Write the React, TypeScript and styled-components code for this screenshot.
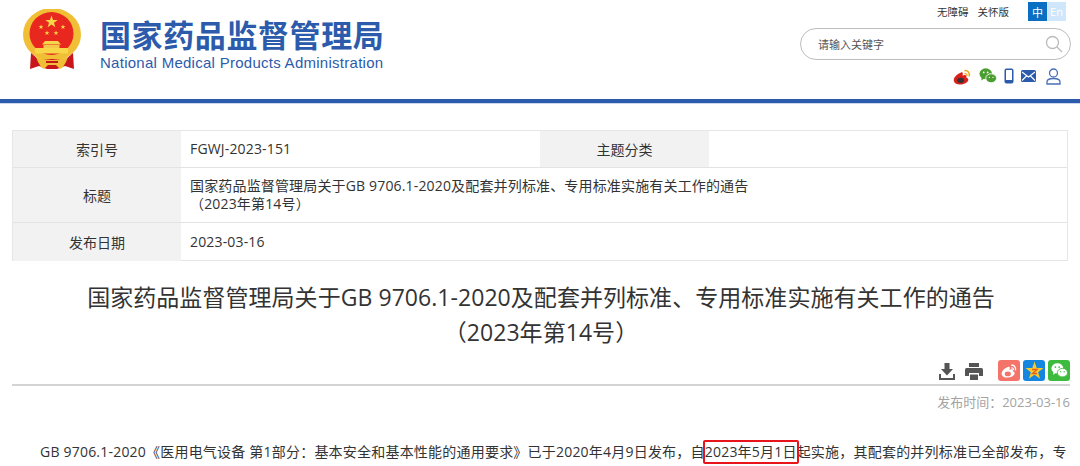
import React from "react"
import styled, { createGlobalStyle } from "styled-components"

const GlobalStyle = createGlobalStyle`
  html, body { margin: 0; padding: 0; background: #fff; }
  body { font-family: "Open Sans", "Noto Sans CJK SC", sans-serif; color: #333; }
`

const Page = styled.div`
  width: 1080px;
  height: 466px;
  overflow: hidden;
`

const Header = styled.header`
  height: 99px;
  display: flex;
  justify-content: space-between;
  border-bottom: 4px solid #2c5bab;
  box-shadow: 0 1px 0 #c9d8ee;
`

const Brand = styled.div`
  display: flex;
  align-items: flex-start;
  padding: 9px 0 0 23px;
  gap: 19px;
`

const BrandText = styled.div`
  display: flex;
  flex-direction: column;
  padding-top: 4px;
`

const BrandTitle = styled.div`
  font-family: "Noto Sans CJK SC", sans-serif;
  font-size: 31px;
  font-weight: 700;
  line-height: 42px;
  color: #2c5bab;
  letter-spacing: 0.6px;
  white-space: nowrap;
`

const BrandSub = styled.div`
  font-family: "Liberation Sans", sans-serif;
  font-size: 15px;
  line-height: 18px;
  margin-top: -1px;
  color: #2c5bab;
  letter-spacing: 0.27px;
  white-space: nowrap;
`

const Tools = styled.div`
  width: 285px;
  padding-top: 2px;
  display: flex;
  flex-direction: column;
  align-items: flex-end;
`

const TopLinks = styled.div`
  display: flex;
  align-items: center;
  height: 19px;
  padding-right: 14px;
  font-size: 10.5px;
  color: #333;
`

const TopLink = styled.span<{ $gap: number }>`
  margin-right: ${p => p.$gap}px;
`

const LangTab = styled.span<{ $active?: boolean }>`
  width: 19px;
  height: 19px;
  display: flex;
  align-items: center;
  justify-content: center;
  font-size: 11px;
  color: #fff;
  background: ${p => (p.$active ? "#0a6fc2" : "#cfe6fb")};
`

const SearchBox = styled.div`
  width: 245px;
  height: 30px;
  margin: 7px 9px 0 0;
  border: 1px solid #bdbdbd;
  border-radius: 16px;
  display: flex;
  align-items: center;
  justify-content: space-between;
  padding: 0 7px 0 17px;
  font-size: 11px;
  color: #555;
`

const Social = styled.div`
  display: flex;
  align-items: center;
  gap: 7px;
  height: 18px;
  margin-top: 7px;
  padding-right: 19px;
`

const UserIcon = styled.svg`
  margin-left: 3px;
`

const Main = styled.main`
  padding: 27px 10px 0 12px;
`

const InfoTable = styled.div`
  display: grid;
  grid-template-columns: 168px 359px 169px 1fr;
  grid-template-rows: 37px 55px 38px;
  border: 1px solid #e6e6e6;
  width: 1056px;
  box-sizing: border-box;
  height: 131px;
`

const Label = styled.div<{ $last?: boolean }>`
  background: #f2f2f2;
  display: flex;
  align-items: center;
  justify-content: center;
  font-size: 14px;
  color: #333;
  padding-bottom: 1px;
  border-bottom: ${p => (p.$last ? "none" : "1px solid #e3e3e3")};
`

const Value = styled.div<{ $span?: boolean; $last?: boolean }>`
  grid-column: ${p => (p.$span ? "2 / 5" : "auto")};
  display: flex;
  align-items: center;
  padding-left: 9px;
  font-size: 14px;
  letter-spacing: 0.16px;
  color: #333;
  line-height: 18px;
  border-bottom: ${p => (p.$last ? "none" : "1px solid #e3e3e3")};
`

const Headline = styled.h1`
  margin: 19px 0 0;
  padding: 0 40px;
  text-align: center;
  font-size: 23px;
  font-weight: 400;
  letter-spacing: 0.05px;
  line-height: 35px;
  color: #333;
`

const ShareRow = styled.div`
  margin-top: 10px;
  width: 1058px;
  height: 26px;
  box-sizing: border-box;
  border-bottom: 2px solid #d4d4d4;
  display: flex;
  justify-content: flex-end;
  align-items: flex-start;
`

const ShareBtn = styled.span<{ $bg: string }>`
  width: 22px;
  height: 21px;
  border-radius: 3px;
  background: ${p => p.$bg};
  display: flex;
  align-items: center;
  justify-content: center;
  margin-left: 3px;
`

const PlainIcon = styled.span<{ $gap: number }>`
  width: 20px;
  height: 22px;
  margin-right: ${p => p.$gap}px;
  display: flex;
  align-items: center;
  justify-content: center;
`

const PublishTime = styled.div`
  margin-top: 7px;
  width: 1058px;
  text-align: right;
  font-size: 13px;
  line-height: 18px;
  color: #a3a3a3;
`

const Body = styled.p`
  margin: 29px 0 0;
  width: 1058px;
  text-indent: 28px;
  font-size: 14px;
  letter-spacing: 0.21px;
  line-height: 24px;
  color: #333;
  white-space: nowrap;
`

const Highlight = styled.span`
  display: inline-block;
  text-indent: 0;
  position: relative;
  &::after {
    content: "";
    position: absolute;
    left: -2px;
    right: -2px;
    top: 0;
    bottom: 0;
    border: 2px solid #e8141c;
    border-radius: 2px;
  }
`

const star = (cx: number, cy: number, r: number) => {
  const pts: string[] = []
  for (let i = 0; i < 10; i++) {
    const a = (Math.PI / 5) * i - Math.PI / 2
    const d = i % 2 === 0 ? r : r * 0.4
    pts.push(`${(cx + d * Math.cos(a)).toFixed(2)},${(cy + d * Math.sin(a)).toFixed(2)}`)
  }
  return pts.join(" ")
}

const Emblem = () => (
  <svg width="58" height="62" viewBox="0 0 58 62">
    <ellipse cx="29" cy="25.5" rx="29" ry="26.5" fill="#f0bf35" />
    <ellipse cx="28.5" cy="24.5" rx="22" ry="21.5" fill="#e8281f" />
    <polygon points={star(28.5, 13, 6.5)} fill="#f7d64a" />
    <polygon points={star(18, 18, 2.6)} fill="#f7d64a" />
    <polygon points={star(40, 18, 2.6)} fill="#f7d64a" />
    <polygon points={star(24, 24, 2.6)} fill="#f7d64a" />
    <polygon points={star(33, 24, 2.6)} fill="#f7d64a" />
    <path d="M22 32 H35 L38 35.5 H19Z" fill="#f7d64a" />
    <rect x="20.5" y="36" width="16" height="3" fill="#f4c94a" />
    <rect x="12" y="39" width="33" height="5.5" fill="#f7d64a" />
    <path d="M8 44 L7 60 L16 57 L24 60 H34 L42 57 L51 60 L50 44 L43 50 H15Z" fill="#c8161d" />
    <path d="M13 48 Q29 54 45 48 L43 53 L40 58 L37 60 L33 56 H25 L21 60 L18 58 L15 53Z" fill="#f0bf35" />
    <rect x="23" y="52" width="12" height="2" fill="#c8161d" />
  </svg>
)

const WeiboIcon = ({ size = 20, eye = "#333", body = "#d9211c", ring = "#f2a81d" }) => (
  <svg width={size} height={size} viewBox="0 0 20 20">
    <path d="M8 6 C3 8 0 12 1 15 C2 19 9 19 13 17 C17 15 17 12 14 11 C15 8 12 8 10 9 C11 6 10 5 8 6Z" fill={body} />
    <ellipse cx="8" cy="14" rx="3.6" ry="2.8" fill={eye} />
    <path d="M12 4 C15 3 18 6 17 10" stroke={ring} strokeWidth="1.6" fill="none" />
    <path d="M12 7 C14 6.5 15 8 14.6 9.5" stroke={ring} strokeWidth="1.4" fill="none" />
  </svg>
)

const WechatIcon = ({ size = 20, big = "#4a9e2f", small = "#4a9e2f", gap = "#fff" }) => (
  <svg width={size} height={size} viewBox="0 0 20 20">
    <ellipse cx="7.5" cy="7.5" rx="7" ry="6" fill={big} />
    <path d="M3 11 L2.5 15 L7 12Z" fill={big} />
    <ellipse cx="13.5" cy="12.5" rx="6" ry="5" fill={small} stroke={gap} strokeWidth="1" />
    <circle cx="5.2" cy="6" r="1" fill={gap} />
    <circle cx="9.6" cy="6" r="1" fill={gap} />
    <circle cx="11.5" cy="11.5" r="0.8" fill={gap} />
    <circle cx="15.5" cy="11.5" r="0.8" fill={gap} />
  </svg>
)

const App = () => (
  <Page>
    <GlobalStyle />
    <Header>
      <Brand>
        <Emblem />
        <BrandText>
          <BrandTitle>国家药品监督管理局</BrandTitle>
          <BrandSub>National Medical Products Administration</BrandSub>
        </BrandText>
      </Brand>
      <Tools>
        <TopLinks>
          <TopLink $gap={9}>无障碍</TopLink>
          <TopLink $gap={19}>关怀版</TopLink>
          <LangTab $active>中</LangTab>
          <LangTab>En</LangTab>
        </TopLinks>
        <SearchBox>
          请输入关键字
          <svg width="18" height="18" viewBox="0 0 18 18" fill="none" stroke="#bbb" strokeWidth="1.3">
            <circle cx="7.5" cy="7.5" r="6" />
            <path d="M12 12 L17 17" />
          </svg>
        </SearchBox>
        <Social>
          <WeiboIcon size={19} />
          <WechatIcon size={18} />
          <svg width="10" height="16" viewBox="0 0 10 16">
            <rect x="0.5" y="0.5" width="9" height="15" rx="2" fill="#2c5bab" />
            <rect x="2" y="2" width="6" height="10" fill="#fff" />
          </svg>
          <svg width="15" height="12" viewBox="0 0 15 12">
            <rect width="15" height="12" rx="1.5" fill="#2c5bab" />
            <path d="M1 2 L7.5 7 L14 2 M1 10.5 L5.5 6 M14 10.5 L9.5 6" stroke="#fff" strokeWidth="1.1" fill="none" />
          </svg>
          <UserIcon width="15" height="17" viewBox="0 0 15 17" fill="none" stroke="#4a6fb8" strokeWidth="1.3">
            <circle cx="7.5" cy="5" r="4" />
            <path d="M1 16 V14 C1 11.5 3 10.5 7.5 10.5 C12 10.5 14 11.5 14 14 V16Z" />
          </UserIcon>
        </Social>
      </Tools>
    </Header>
    <Main>
      <InfoTable>
        <Label>索引号</Label>
        <Value>FGWJ-2023-151</Value>
        <Label>主题分类</Label>
        <Value />
        <Label>标题</Label>
        <Value $span>
          <div>
            国家药品监督管理局关于GB 9706.1-2020及配套并列标准、专用标准实施有关工作的通告
            <br />
            （2023年第14号）
          </div>
        </Value>
        <Label $last>发布日期</Label>
        <Value $span $last>2023-03-16</Value>
      </InfoTable>
      <Headline>
        国家药品监督管理局关于GB 9706.1-2020及配套并列标准、专用标准实施有关工作的通告
        <br />
        （2023年第14号）
      </Headline>
      <ShareRow>
        <PlainIcon $gap={7}>
          <svg width="16" height="17" viewBox="0 0 16 17" fill="#555">
            <path d="M5.5 0 H10.5 V6 H14 L8 12.5 L2 6 H5.5Z" />
            <path d="M0 11 H2 V15 H14 V11 H16 V17 H0Z" />
          </svg>
        </PlainIcon>
        <PlainIcon $gap={11}>
          <svg width="18" height="17" viewBox="0 0 18 17" fill="#555">
            <path d="M4 0 H14 V4 H4Z" />
            <path d="M1.5 5 H16.5 Q18 5 18 7 V13 H14 V10 H4 V13 H0 V7 Q0 5 1.5 5Z" />
            <rect x="5" y="11.5" width="8" height="5.5" />
          </svg>
        </PlainIcon>
        <ShareBtn $bg="#f5746a">
          <WeiboIcon size={17} body="#fff" eye="#f5746a" ring="#fff" />
        </ShareBtn>
        <ShareBtn $bg="#1586e0">
          <svg width="19" height="19" viewBox="0 0 19 19">
            <polygon points={star(9.5, 10, 9.5)} fill="#f8c92c" />
            <path d="M7 8.5 H12 L7.5 12.5 H12" stroke="#e2611c" strokeWidth="1.3" fill="none" />
          </svg>
        </ShareBtn>
        <ShareBtn $bg="#3dbb3f">
          <WechatIcon size={17} big="#fff" small="#fff" gap="#3dbb3f" />
        </ShareBtn>
      </ShareRow>
      <PublishTime>发布时间：2023-03-16</PublishTime>
      <Body>
        GB 9706.1-2020《医用电气设备 第1部分：基本安全和基本性能的通用要求》已于2020年4月9日发布，自
        <Highlight>2023年5月1日</Highlight>起实施，其配套的并列标准已全部发布，专
      </Body>
    </Main>
  </Page>
)

export default App
